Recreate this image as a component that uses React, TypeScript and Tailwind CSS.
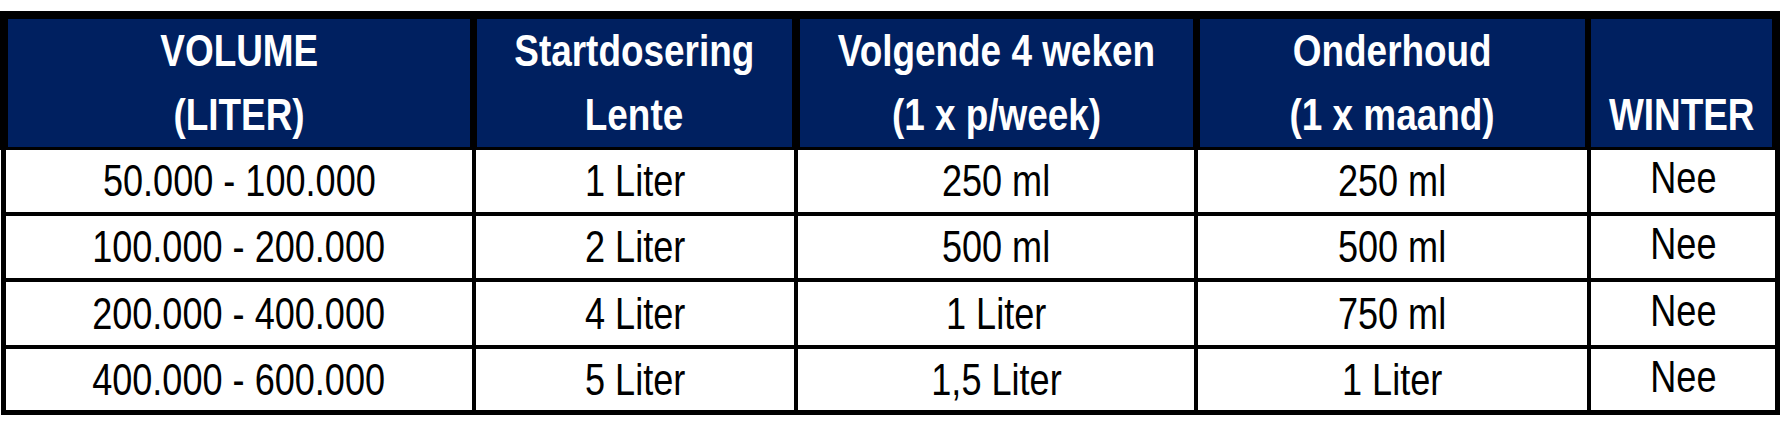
import React from "react";

const headers: [string, string][] = [
  ["VOLUME", "(LITER)"],
  ["Startdosering", "Lente"],
  ["Volgende 4 weken", "(1 x p/week)"],
  ["Onderhoud", "(1 x maand)"],
  ["\u00a0", "WINTER"],
];

const rows: string[][] = [
  ["50.000 - 100.000", "1 Liter", "250 ml", "250 ml", "Nee"],
  ["100.000 - 200.000", "2 Liter", "500 ml", "500 ml", "Nee"],
  ["200.000 - 400.000", "4 Liter", "1 Liter", "750 ml", "Nee"],
  ["400.000 - 600.000", "5 Liter", "1,5 Liter", "1 Liter", "Nee"],
];

const font = { fontFamily: '"Liberation Sans Narrow", "Arial Narrow", "Liberation Sans", Arial, sans-serif' };

const headerMargins = ["", "pl-[7px]", "pl-[8px]", "pl-[7px]", "pl-[6px]"];

export default function App() {
  return (
    <div className="w-[1785px] h-[426px] bg-white pt-[11px]" style={font}>
      <div className="w-[1780px]">
        <div className="bg-black pt-[8px] pl-[8px] pr-[8px] pb-[5px]">
          <div className="grid grid-cols-[462px_322px_401px_392px_187px] h-[126px]">
            {headers.map((h, i) => (
              <div key={i} className={"flex " + headerMargins[i]}>
                <div className="flex-1 bg-[#002060] text-white font-bold text-[45px] leading-[64px] flex flex-col items-center justify-center">
                  <span className="inline-block whitespace-nowrap scale-x-[0.82]">{h[0]}</span>
                  <span className="inline-block whitespace-nowrap scale-x-[0.82]">{h[1]}</span>
                </div>
              </div>
            ))}
          </div>
        </div>
        <div className="ml-[1px] w-[1779px] bg-black border-l-[5px] border-r-[5px] border-b-[5px] border-black grid grid-cols-[466px_318px_396px_389px_184px] grid-rows-[62px_62px_63px_61px] gap-[4px]">
          {rows.map((r, ri) =>
            r.map((c, ci) => (
              <div
                key={ri + "-" + ci}
                className={
                  "bg-white text-black text-[44px] leading-none flex items-center justify-center whitespace-nowrap " +
                  (ci === 4 ? "pb-[6px]" : "")
                }
              >
                <span className="inline-block scale-x-[0.82]">{c}</span>
              </div>
            ))
          )}
        </div>
      </div>
    </div>
  );
}
